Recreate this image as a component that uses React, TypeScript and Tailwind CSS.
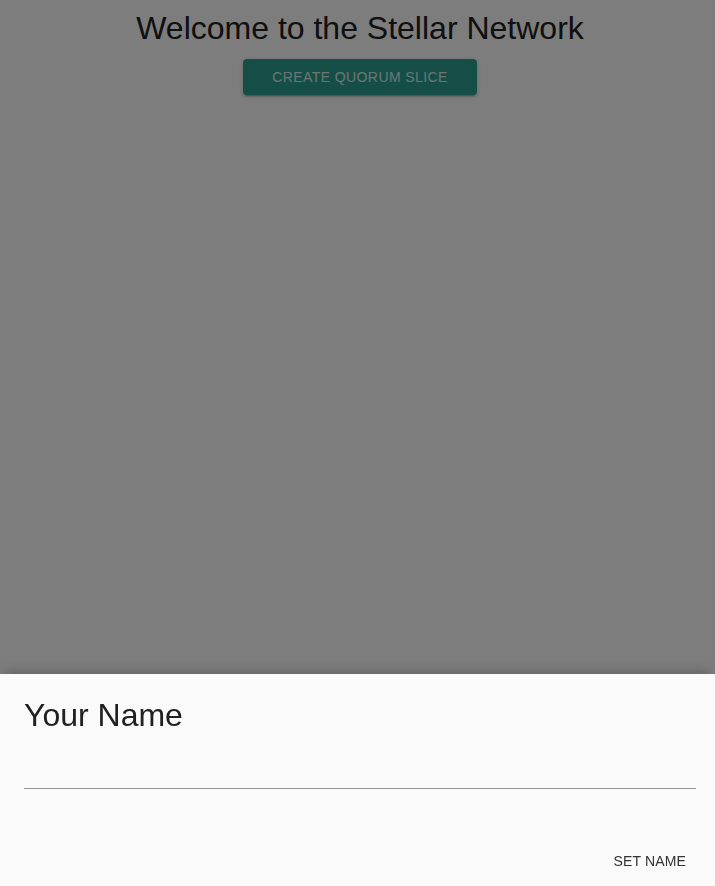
import { useState } from "react"

export default function App() {
  const [name, setName] = useState("")

  return (
    <div className="relative min-h-screen bg-[#fafafa] font-['Liberation_Sans',Arial,sans-serif] text-[#212121]">
      <div className="flex flex-col items-center pt-[7px] pl-[5px]">
        <h1 className="text-[32px] leading-[42px] font-normal">Welcome to the Stellar Network</h1>
        <button className="mt-[10px] w-[234px] h-[36px] rounded bg-[#2a9d8f] text-white/80 text-[14px] tracking-[0.03em] uppercase shadow-[0_3px_1px_-2px_rgba(0,0,0,0.2),0_2px_2px_0_rgba(0,0,0,0.14),0_1px_5px_0_rgba(0,0,0,0.12)]">
          Create Quorum Slice
        </button>
      </div>

      {/* backdrop */}
      <div className="fixed inset-0 bg-black/50" />

      {/* bottom drawer */}
      <div className="fixed inset-x-0 bottom-0 h-[212px] bg-[#fafafa] shadow-[0_-8px_10px_-5px_rgba(0,0,0,0.2)] flex flex-col">
        <h2 className="px-6 pt-[21px] text-[32px] leading-[40px] text-[#212121]">Your Name</h2>
        <div className="pl-6 pr-[19px] mt-[22px]">
          <input
            value={name}
            onChange={(e) => setName(e.target.value)}
            className="block w-full h-[32px] bg-transparent outline-none border-b border-[#949494] text-[16px]"
          />
        </div>
        <div className="mt-auto flex justify-end pr-[21px] pb-[7px]">
          <button className="h-[36px] px-2 text-[14px] tracking-[0.01em] uppercase text-[#333]">
            Set Name
          </button>
        </div>
      </div>
    </div>
  )
}
